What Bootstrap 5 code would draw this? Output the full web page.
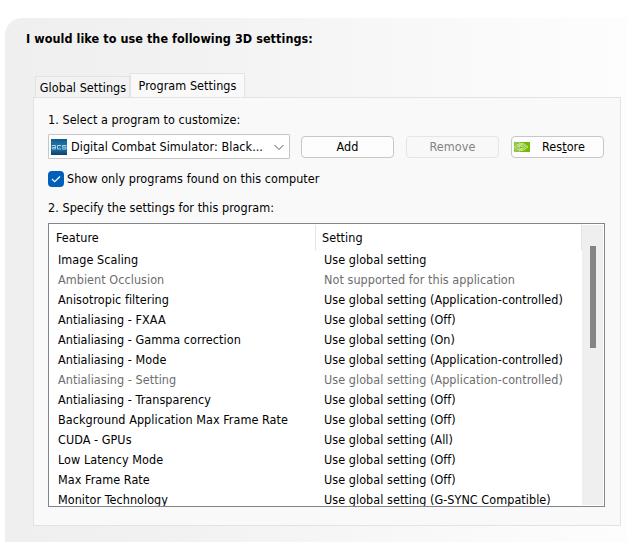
<!DOCTYPE html>
<html lang="en">
<head>
<meta charset="utf-8">
<meta name="viewport" content="width=device-width, initial-scale=1">
<title>3D Settings</title>
<link href="https://cdn.jsdelivr.net/npm/bootstrap@5.3.0/dist/css/bootstrap.min.css" rel="stylesheet">
<style>
html,body{height:100%}
body{background:#fff;color:#000;font:12.5px/20px "DejaVu Sans Condensed","DejaVu Sans",sans-serif;font-stretch:condensed;letter-spacing:.05px}
.stage{padding:18px 0 0 5px;height:542px}
.backdrop{height:524px;padding:11px 6px 0 28px;border-top-left-radius:17px;background:linear-gradient(90deg,#efefef 0%,#f2f2f2 30%,#f8f8f8 65%,#fdfdfd 100%)}
.headline{font-size:12.5px;font-weight:700;line-height:20px;margin:0 0 26px -7px;letter-spacing:.06px}
.settings-tabs{height:22px;border:0;padding-left:2px}
.settings-tabs .nav-link{color:#000;border:1px solid #e3e3e3;border-bottom:0;border-radius:0;padding:0 0 0 1px;margin:0;text-align:center;background:#f2f2f2;height:21px;width:95px;line-height:22px}
.settings-tabs .nav-link.active{background:#f9f9f9;color:#000;height:24px;width:115px;line-height:24px;padding:0;position:relative;z-index:1}
.pane{width:588px;height:429px;border:1px solid #e3e3e3;background:#f9f9f9;padding:12px 15px 0 14px}
.picker{width:242px;height:25px;background:#fff;border:1px solid #c6c6c6;border-radius:1px;padding:0 4px 0 2px}
.action{--bs-btn-padding-y:0;--bs-btn-padding-x:0;--bs-btn-font-size:12.5px;--bs-btn-line-height:20px;--bs-btn-bg:#fdfdfd;--bs-btn-color:#000;--bs-btn-border-color:#c7c7c7;--bs-btn-border-radius:4px;--bs-btn-disabled-bg:#f8f8f8;--bs-btn-disabled-color:#838383;--bs-btn-disabled-border-color:#e5e5e5;--bs-btn-disabled-opacity:1;width:93px;height:22px;letter-spacing:inherit;margin-left:12px}
.action-first{margin-left:11px}
.brand-mark{margin-left:2px}
.brand-mark+span{margin-left:12px}
.check-line{margin-top:10px;height:20px}
.tick{width:16px;height:16px;background:#005fb8;border-radius:4px;flex:none;margin-right:3px}
.step-two{margin:9px 0 5px}
.grid-box{width:557px;height:284px;border:1px solid #82858a;background:#fff;overflow:hidden;padding:1px}
.feature-col{width:266px;flex:none}
.head-row{height:25px;line-height:26px}
.head-row>div{border-right:1px solid #e3e3e3;padding-left:6px}
.off{color:#6d6d6d}
.track{width:21px;background:#efefef;padding:21px 0 0 8px;flex:none}
.thumb{width:6px;height:102px;background:#858585}
</style>
</head>
<body class="overflow-hidden">
<main class="stage"><section class="backdrop">
<h1 class="headline">I would like to use the following 3D settings:</h1>
<nav class="nav settings-tabs align-items-end flex-nowrap">
<a class="nav-link text-nowrap">Global Settings</a>
<a class="nav-link active text-nowrap">Program Settings</a>
</nav>
<div class="pane">
<div class="text-nowrap">1. Select a program to customize:</div>
<div class="d-flex align-items-center mt-1">
<div class="picker d-flex align-items-center text-nowrap">
<svg width="16" height="16" viewBox="0 0 16 16" class="flex-shrink-0"><defs><linearGradient id="sky" x2="0" y2="1"><stop stop-color="#12588d"/><stop offset=".5" stop-color="#247eac"/><stop offset="1" stop-color="#0b3f70"/></linearGradient></defs><path fill="url(#sky)" d="M0 0h16v16H0z"/><path d="M1 6.500h3.500v3.500H1.500V8.500h3M10 6.500H6.500V10H10M15.500 6.500h-4v1.700h3.500V10h-4" fill="none" stroke="#a9cfe2"/></svg>
<span class="ms-1 flex-grow-1">Digital Combat Simulator: Black...</span>
<svg width="12" height="10" viewBox="0 0 12 10"><path d="M1.500 3 6 7.500 10.500 3" fill="none" stroke="#555"/></svg>
</div>
<button class="btn action action-first">Add</button>
<button class="btn action" disabled>Remove</button>
<button class="btn action d-flex align-items-center">
<svg class="brand-mark" width="16" height="10" viewBox="0 0 16 10"><path fill="#8dc63f" d="M0 0h16v10H0z"/><path fill="#76b900" d="M6 0h10v10H6z"/><path d="M.5 5Q5-.5 12 4.500 6 11 .5 5M3 5q3-3.500 6.500 0-3 3.500-5 0 2-2 3.500 0M5 1q6 0 9 4-4 4-9 4" fill="none" stroke="#d3e9b0" stroke-width=".9"/></svg>
<span>Res<u>t</u>ore</span></button>
</div>
<div class="check-line d-flex align-items-center text-nowrap">
<span class="tick d-flex"><svg width="16" height="16" viewBox="0 0 16 16"><path d="m4 8 2.700 2.700L12 5.500" fill="none" stroke="#fff" stroke-width="1.200"/></svg></span>
<span>Show only programs found on this computer</span></div>
<div class="step-two">2. Specify the settings for this program:</div>
<div class="grid-box d-flex">
<div class="flex-grow-1 text-nowrap">
<div class="head-row d-flex"><div class="feature-col">Feature</div><div class="flex-grow-1">Setting</div></div>
<div id="rows"></div>
</div>
<div class="track"><div class="thumb"></div></div>
</div>
</div>
</section></main>
<script src="https://cdn.jsdelivr.net/npm/bootstrap@5.3.0/dist/js/bootstrap.bundle.min.js"></script>
<script>
const rows=[["Image Scaling","Use global setting"],["Ambient Occlusion","Not supported for this application",1],["Anisotropic filtering","Use global setting (Application-controlled)"],["Antialiasing - FXAA","Use global setting (Off)"],["Antialiasing - Gamma correction","Use global setting (On)"],["Antialiasing - Mode","Use global setting (Application-controlled)"],["Antialiasing - Setting","Use global setting (Application-controlled)",1],["Antialiasing - Transparency","Use global setting (Off)"],["Background Application Max Frame Rate","Use global setting (Off)"],["CUDA - GPUs","Use global setting (All)"],["Low Latency Mode","Use global setting (Off)"],["Max Frame Rate","Use global setting (Off)"],["Monitor Technology","Use global setting (G-SYNC Compatible)"]];
document.getElementById("rows").innerHTML=rows.map(([f,s,o])=>`<div class="d-flex ${o?"off":""}"><div class="feature-col ps-2">${f}</div><div class="ps-2">${s}</div></div>`).join("");
</script>
</body>
</html>
